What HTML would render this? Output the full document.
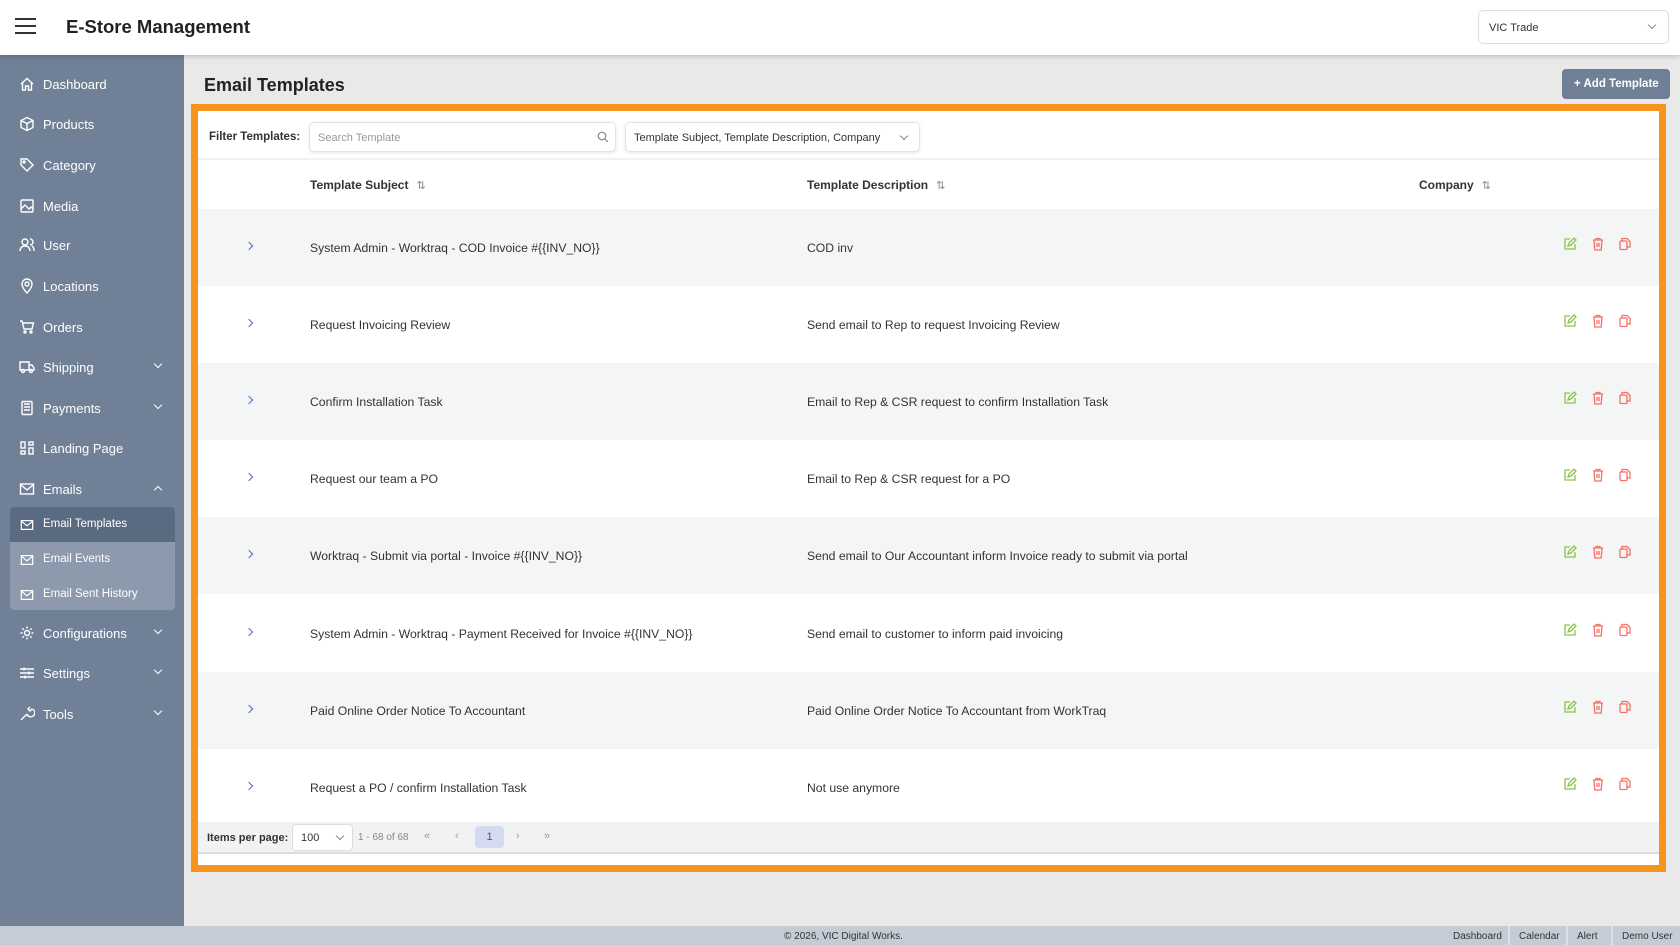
<!DOCTYPE html>
<html><head><meta charset="utf-8"><style>
*{box-sizing:border-box;margin:0;padding:0}
body{width:1680px;height:945px;overflow:hidden;font-family:"Liberation Sans",sans-serif;background:#e9e9e9;position:relative;color:#333}
.hdr{position:absolute;left:0;top:0;width:1680px;height:55px;background:#fff;box-shadow:0 2px 4px rgba(0,0,0,.15);z-index:2}
.hdr .ham{position:absolute;left:15px;top:18px;width:21px;height:16px;border-top:2px solid #333;border-bottom:2px solid #333}
.hdr .ham:after{content:"";position:absolute;left:0;top:5px;width:21px;height:2px;background:#333}
.hdr .t{position:absolute;left:66px;top:16px;font-size:18.5px;font-weight:bold;color:#222}
.sel{position:absolute;left:1478px;top:10px;width:191px;height:34px;border:1px solid #ddd;border-radius:5px;font-size:11px;padding:11px 10px;color:#333}
.chev{position:absolute;width:6px;height:6px;border-right:1.3px solid #888;border-bottom:1.3px solid #888;transform:rotate(45deg)}
.sb{position:absolute;left:0;top:55px;width:184px;height:871px;background:#6f8097}
.it{position:absolute;left:0;width:184px;height:30px;color:#fff;font-size:13px}
.it svg{position:absolute;left:19px;top:7px}
.it span{position:absolute;left:43px;top:8px}
.it .c{position:absolute;left:155px;top:9px;width:6px;height:6px;border-right:1.5px solid #fff;border-bottom:1.5px solid #fff;transform:rotate(45deg)}
.it .c.up{transform:rotate(-135deg);top:13px}
.sub{position:absolute;left:10px;top:452px;width:165px;height:103px;background:#8d9aae;border-radius:4px}
.sub .act{position:absolute;left:0;top:0;width:165px;height:35px;background:#5a6a80;border-radius:4px 4px 0 0}
.sit{position:absolute;left:0;width:165px;color:#fff;font-size:11.5px}
.sit svg{position:absolute;left:10px;top:0}
.sit span{position:absolute;left:33px;top:0}
.title{position:absolute;left:204px;top:75px;font-size:18px;font-weight:bold;color:#222}
.add{position:absolute;left:1562px;top:69px;width:108px;height:30px;background:#6f8097;border-radius:4px;color:#fff;font-size:11.5px;font-weight:bold;padding:9px 0 0 12px}
.box{position:absolute;left:191px;top:104px;width:1475px;height:768px;border:7px solid #f7941d}
.card{position:absolute;left:0;top:0;right:0;bottom:0;background:#fff}
.fl{position:absolute;left:11px;top:20px;font-size:11.5px;font-weight:bold;color:#333}
.inp{position:absolute;top:11px;height:30px;border:1px solid #dfe2ec;border-radius:5px;font-size:11px;padding:9px 8px;box-shadow:0 1px 3px rgba(120,130,200,.2)}
.th{position:absolute;top:67px;font-size:12px;font-weight:bold;color:#333}
.th i{font-style:normal;font-weight:normal;color:#888;font-size:11px;margin-left:8px}
.row{position:absolute;left:0;width:1461px;height:77px;font-size:12.2px;color:#333}
.row.g{background:#f4f5f5}
.row .a{position:absolute;left:48px;top:34px;width:6px;height:6px;border-right:1.5px solid #5566cc;border-top:1.5px solid #5566cc;transform:rotate(45deg)}
.row .s{position:absolute;left:112px;top:32px}
.row .d{position:absolute;left:609px;top:32px}
.row svg{position:absolute;top:28px}
.pg{position:absolute;left:0;top:711px;width:1461px;height:32px;background:#f1f2f4;border-bottom:2px solid #dcdde2;font-size:11px}
.ft{position:absolute;left:0;top:926px;width:1680px;height:19px;background:#c6ccd6;font-size:10px;color:#333}
.ft span{position:absolute;top:5px}
.ft b{position:absolute;top:0;width:2px;height:19px;background:#dde1e7}
</style></head><body>
<div class="hdr"><div class="ham"></div><div class="t">E-Store Management</div>
<div class="sel">VIC Trade<div class="chev" style="left:170px;top:11px"></div></div></div>

<div class="sb">
<div class="it" style="top:14px"><svg width="16" height="16" viewBox="0 0 16 16" fill="none" stroke="#fff" stroke-width="1.4"><path d="M2 8L8 2.5 14 8M3.5 7v7h3v-4h3v4h3V7"/></svg><span>Dashboard</span></div>
<div class="it" style="top:54px"><svg width="16" height="16" viewBox="0 0 16 16" fill="none" stroke="#fff" stroke-width="1.4"><path d="M8 1.5l6 3v7l-6 3-6-3v-7zM2 4.5l6 3 6-3M8 7.5v7"/></svg><span>Products</span></div>
<div class="it" style="top:95px"><svg width="16" height="16" viewBox="0 0 16 16" fill="none" stroke="#fff" stroke-width="1.4"><path d="M2 2h6l6 6-6 6-6-6z"/><circle cx="5" cy="5" r="1"/></svg><span>Category</span></div>
<div class="it" style="top:136px"><svg width="16" height="16" viewBox="0 0 16 16" fill="none" stroke="#fff" stroke-width="1.4"><rect x="2" y="2" width="12" height="12" rx="1"/><path d="M2 11l4-4 4 4 2-2 2 2"/></svg><span>Media</span></div>
<div class="it" style="top:175px"><svg width="16" height="16" viewBox="0 0 16 16" fill="none" stroke="#fff" stroke-width="1.4"><circle cx="6" cy="5" r="3"/><path d="M1 14c0-3 2-5 5-5s5 2 5 5M11 2a3 3 0 010 6M13 9c1.5 1 2 3 2 5"/></svg><span>User</span></div>
<div class="it" style="top:216px"><svg width="16" height="16" viewBox="0 0 16 16" fill="none" stroke="#fff" stroke-width="1.4"><path d="M8 15s5-5 5-9a5 5 0 00-10 0c0 4 5 9 5 9z"/><circle cx="8" cy="6" r="2"/></svg><span>Locations</span></div>
<div class="it" style="top:257px"><svg width="16" height="16" viewBox="0 0 16 16" fill="none" stroke="#fff" stroke-width="1.4"><path d="M1 2h2l2 8h8l1.5-6H4"/><circle cx="6" cy="13" r="1"/><circle cx="12" cy="13" r="1"/></svg><span>Orders</span></div>
<div class="it" style="top:297px"><svg width="16" height="16" viewBox="0 0 16 16" fill="none" stroke="#fff" stroke-width="1.4"><path d="M1 3h9v8H1zM10 6h3l2 3v2h-5"/><circle cx="4" cy="12" r="1.5"/><circle cx="12" cy="12" r="1.5"/></svg><span>Shipping</span><div class="c"></div></div>
<div class="it" style="top:338px"><svg width="16" height="16" viewBox="0 0 16 16" fill="none" stroke="#fff" stroke-width="1.4"><rect x="3" y="1.5" width="10" height="13" rx="1"/><path d="M5 4h6M5 7h6M5 10h6"/></svg><span>Payments</span><div class="c"></div></div>
<div class="it" style="top:378px"><svg width="16" height="16" viewBox="0 0 16 16" fill="none" stroke="#fff" stroke-width="1.4"><rect x="2" y="2" width="4" height="6"/><rect x="10" y="2" width="4" height="3"/><rect x="2" y="11" width="4" height="3"/><rect x="10" y="8" width="4" height="6"/></svg><span>Landing Page</span></div>
<div class="it" style="top:419px"><svg width="16" height="16" viewBox="0 0 16 16" fill="none" stroke="#fff" stroke-width="1.4"><rect x="1.5" y="3" width="13" height="10"/><path d="M1.5 3.5L8 9l6.5-5.5"/></svg><span>Emails</span><div class="c up"></div></div>
<div class="sub"><div class="act"></div>
<div class="sit" style="top:11px"><svg width="14" height="14" viewBox="0 0 16 16" fill="none" stroke="#fff" stroke-width="1.4"><rect x="1.5" y="3" width="13" height="10"/><path d="M1.5 3.5L8 9l6.5-5.5"/></svg><span>Email Templates</span></div>
<div class="sit" style="top:46px"><svg width="14" height="14" viewBox="0 0 16 16" fill="none" stroke="#fff" stroke-width="1.4"><rect x="1.5" y="3" width="13" height="10"/><path d="M1.5 3.5L8 9l6.5-5.5"/></svg><span>Email Events</span></div>
<div class="sit" style="top:81px"><svg width="14" height="14" viewBox="0 0 16 16" fill="none" stroke="#fff" stroke-width="1.4"><rect x="1.5" y="3" width="13" height="10"/><path d="M1.5 3.5L8 9l6.5-5.5"/></svg><span>Email Sent History</span></div>
</div>
<div class="it" style="top:563px"><svg width="16" height="16" viewBox="0 0 16 16" fill="none" stroke="#fff" stroke-width="1.4"><circle cx="8" cy="8" r="2.5"/><path d="M8 1.5v2M8 12.5v2M1.5 8h2M12.5 8h2M3.4 3.4l1.4 1.4M11.2 11.2l1.4 1.4M3.4 12.6l1.4-1.4M11.2 4.8l1.4-1.4"/></svg><span>Configurations</span><div class="c"></div></div>
<div class="it" style="top:603px"><svg width="16" height="16" viewBox="0 0 16 16" fill="none" stroke="#fff" stroke-width="1.4"><path d="M1 4h14M1 8h14M1 12h14M5 2.5v3M10 6.5v3M6 10.5v3"/></svg><span>Settings</span><div class="c"></div></div>
<div class="it" style="top:644px"><svg width="16" height="16" viewBox="0 0 16 16" fill="none" stroke="#fff" stroke-width="1.4"><path d="M2 14l6-6M8 8a4 4 0 105-5l-2 2-2-2 2-2"/></svg><span>Tools</span><div class="c"></div></div>
</div>

<div class="title">Email Templates</div>
<div class="add">+ Add Template</div>

<div class="box"><div class="card">
<div class="fl">Filter Templates:</div>
<div class="inp" style="left:111px;width:307px;color:#999">Search Template<svg style="position:absolute;right:6px;top:8px" width="12" height="12" viewBox="0 0 12 12" fill="none" stroke="#888" stroke-width="1.2"><circle cx="5" cy="5" r="3.8"/><path d="M8 8l3 3"/></svg></div>
<div class="inp" style="left:427px;width:295px;color:#333">Template Subject, Template Description, Company<div class="chev" style="left:275px;top:10px"></div></div>
<div style="position:absolute;left:0;top:47px;width:1461px;height:2px;background:#f1f1f3"></div>
<div class="th" style="left:112px">Template Subject<i>⇅</i></div>
<div class="th" style="left:609px">Template Description<i>⇅</i></div>
<div class="th" style="left:1221px">Company<i>⇅</i></div>

<div class="row g" style="top:98px"><div class="a"></div><div class="s">System Admin - Worktraq - COD Invoice #{{INV_NO}}</div><div class="d">COD inv</div></div>
<div class="row" style="top:175px"><div class="a"></div><div class="s">Request Invoicing Review</div><div class="d">Send email to Rep to request Invoicing Review</div></div>
<div class="row g" style="top:252px"><div class="a"></div><div class="s">Confirm Installation Task</div><div class="d">Email to Rep &amp; CSR request to confirm Installation Task</div></div>
<div class="row" style="top:329px"><div class="a"></div><div class="s">Request our team a PO</div><div class="d">Email to Rep &amp; CSR request for a PO</div></div>
<div class="row g" style="top:406px"><div class="a"></div><div class="s">Worktraq - Submit via portal - Invoice #{{INV_NO}}</div><div class="d">Send email to Our Accountant inform Invoice ready to submit via portal</div></div>
<div class="row" style="top:484px"><div class="a"></div><div class="s">System Admin - Worktraq - Payment Received for Invoice #{{INV_NO}}</div><div class="d">Send email to customer to inform paid invoicing</div></div>
<div class="row g" style="top:561px"><div class="a"></div><div class="s">Paid Online Order Notice To Accountant</div><div class="d">Paid Online Order Notice To Accountant from WorkTraq</div></div>
<div class="row" style="top:638px"><div class="a"></div><div class="s">Request a PO / confirm Installation Task</div><div class="d">Not use anymore</div></div>

<div class="pg">
<span style="position:absolute;left:9px;top:10px;font-weight:bold;color:#333">Items per page:</span>
<div style="position:absolute;left:94px;top:2px;width:61px;height:27px;background:#fff;border:1px solid #ddd;border-radius:4px;padding:7px 8px;font-size:11px">100<div class="chev" style="left:44px;top:8px"></div></div>
<span style="position:absolute;left:160px;top:10px;color:#888;font-size:10px">1 - 68 of 68</span>
<span style="position:absolute;left:226px;top:8px;color:#999">«</span>
<span style="position:absolute;left:257px;top:8px;color:#999">‹</span>
<div style="position:absolute;left:277px;top:4px;width:29px;height:22px;background:#d3daf2;border-radius:4px;text-align:center;padding-top:5px;color:#555">1</div>
<span style="position:absolute;left:318px;top:8px;color:#999">›</span>
<span style="position:absolute;left:346px;top:8px;color:#999">»</span>
</div>
</div></div>

<div class="ft"><span style="left:784px">© 2026, VIC Digital Works.</span>
<b style="left:1508px"></b><b style="left:1566px"></b><b style="left:1611px"></b>
<span style="left:1453px">Dashboard</span><span style="left:1519px">Calendar</span><span style="left:1577px">Alert</span><span style="left:1622px">Demo User</span></div>

<script>
document.querySelectorAll('.row').forEach(r=>{
r.insertAdjacentHTML('beforeend','<svg style="left:1365px" width="14" height="14" viewBox="0 0 14 14" fill="none" stroke="#8bc34a" stroke-width="1.3"><path d="M7 2H2v10h10V7"/><path d="M5 9l1-3 5-5 2 2-5 5z"/></svg><svg style="left:1393px" width="14" height="14" viewBox="0 0 14 14" fill="none" stroke="#f44336" stroke-opacity=".75" stroke-width="1.3"><path d="M2 3h10M5 3V1.5h4V3M3 3l.8 10h6.4L11 3M6 6v4M8 6v4"/></svg><svg style="left:1420px" width="14" height="14" viewBox="0 0 14 14" fill="none" stroke="#f44336" stroke-opacity=".75" stroke-width="1.3"><path d="M4 4V1.5h5l3 3V10H9"/><rect x="2" y="4" width="7" height="8.5" rx="1"/></svg>');});
</script>
</body></html>
